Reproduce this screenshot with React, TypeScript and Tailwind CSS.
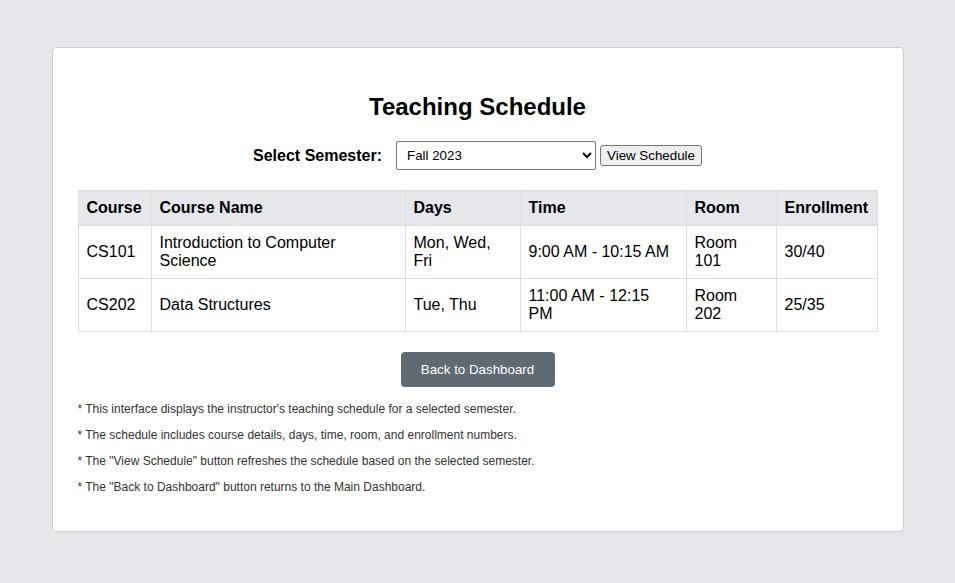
import React from 'react';

const rows = [
  { code: 'CS101', name: 'Introduction to Computer Science', days: 'Mon, Wed, Fri', time: '9:00 AM - 10:15 AM', room: 'Room 101', enroll: '30/40' },
  { code: 'CS202', name: 'Data Structures', days: 'Tue, Thu', time: '11:00 AM - 12:15 PM', room: 'Room 202', enroll: '25/35' },
];

const notes = [
  "* This interface displays the instructor's teaching schedule for a selected semester.",
  '* The schedule includes course details, days, time, room, and enrollment numbers.',
  '* The "View Schedule" button refreshes the schedule based on the selected semester.',
  '* The "Back to Dashboard" button returns to the Main Dashboard.',
];

export default function App() {
  return (
    <div className="min-h-[583px] bg-[#e5e7eb] pt-[47px] pb-[52px] font-['Liberation_Sans',Arial,sans-serif] text-black">
      <div className="mx-auto w-[852px] rounded-[4px] border border-[#cccccc] bg-white p-[25px]">
        <h2 className="mt-[20px] mb-[20px] text-center text-[24px] leading-[28px] font-bold">Teaching Schedule</h2>

        <div className="flex items-center justify-center">
          <label className="mr-[14px] text-[16px] font-bold">Select Semester:</label>
          <select
            defaultValue="fall2023"
            className="h-[29px] w-[200px] rounded-[2px] border border-[#767676] bg-white pl-[6px] text-[13.33px]"
          >
            <option value="fall2023">Fall 2023</option>
            <option value="spring2024">Spring 2024</option>
          </select>
          <button className="ml-[4px] h-[21px] rounded-[3px] border border-[#767676] bg-[#efefef] px-[6px] text-[13.33px] leading-[15px]">
            View Schedule
          </button>
        </div>

        <table className="mt-[20px] w-[799px] table-fixed border-collapse text-[16px]">
          <colgroup>
            <col className="w-[73px]" />
            <col className="w-[254px]" />
            <col className="w-[115px]" />
            <col className="w-[166px]" />
            <col className="w-[90px]" />
            <col className="w-[101px]" />
          </colgroup>
          <thead>
            <tr className="bg-[#e5e7eb]">
              {['Course', 'Course Name', 'Days', 'Time', 'Room', 'Enrollment'].map((h) => (
                <th key={h} className="border border-[#dddddd] p-[8px] text-left font-bold leading-[18px]">
                  {h}
                </th>
              ))}
            </tr>
          </thead>
          <tbody>
            {rows.map((r) => (
              <tr key={r.code}>
                <td className="h-[53px] border border-[#dddddd] p-[8px] leading-[18px]">{r.code}</td>
                <td className="border border-[#dddddd] p-[8px] leading-[18px]">{r.name}</td>
                <td className="border border-[#dddddd] p-[8px] leading-[18px]">{r.days}</td>
                <td className="border border-[#dddddd] p-[8px] leading-[18px]">{r.time}</td>
                <td className="border border-[#dddddd] p-[8px] leading-[18px]">{r.room}</td>
                <td className="border border-[#dddddd] p-[8px] leading-[18px]">{r.enroll}</td>
              </tr>
            ))}
          </tbody>
        </table>

        <div className="mt-[20px] flex justify-center">
          <button className="h-[35px] w-[154px] rounded-[4px] bg-[#5f6a72] text-[13.33px] text-white">
            Back to Dashboard
          </button>
        </div>

        <div className="mt-[15px] text-[12px] leading-[14px] text-[#333333]">
          {notes.map((n) => (
            <p key={n} className="mb-[12px]">
              {n}
            </p>
          ))}
        </div>
      </div>
    </div>
  );
}
